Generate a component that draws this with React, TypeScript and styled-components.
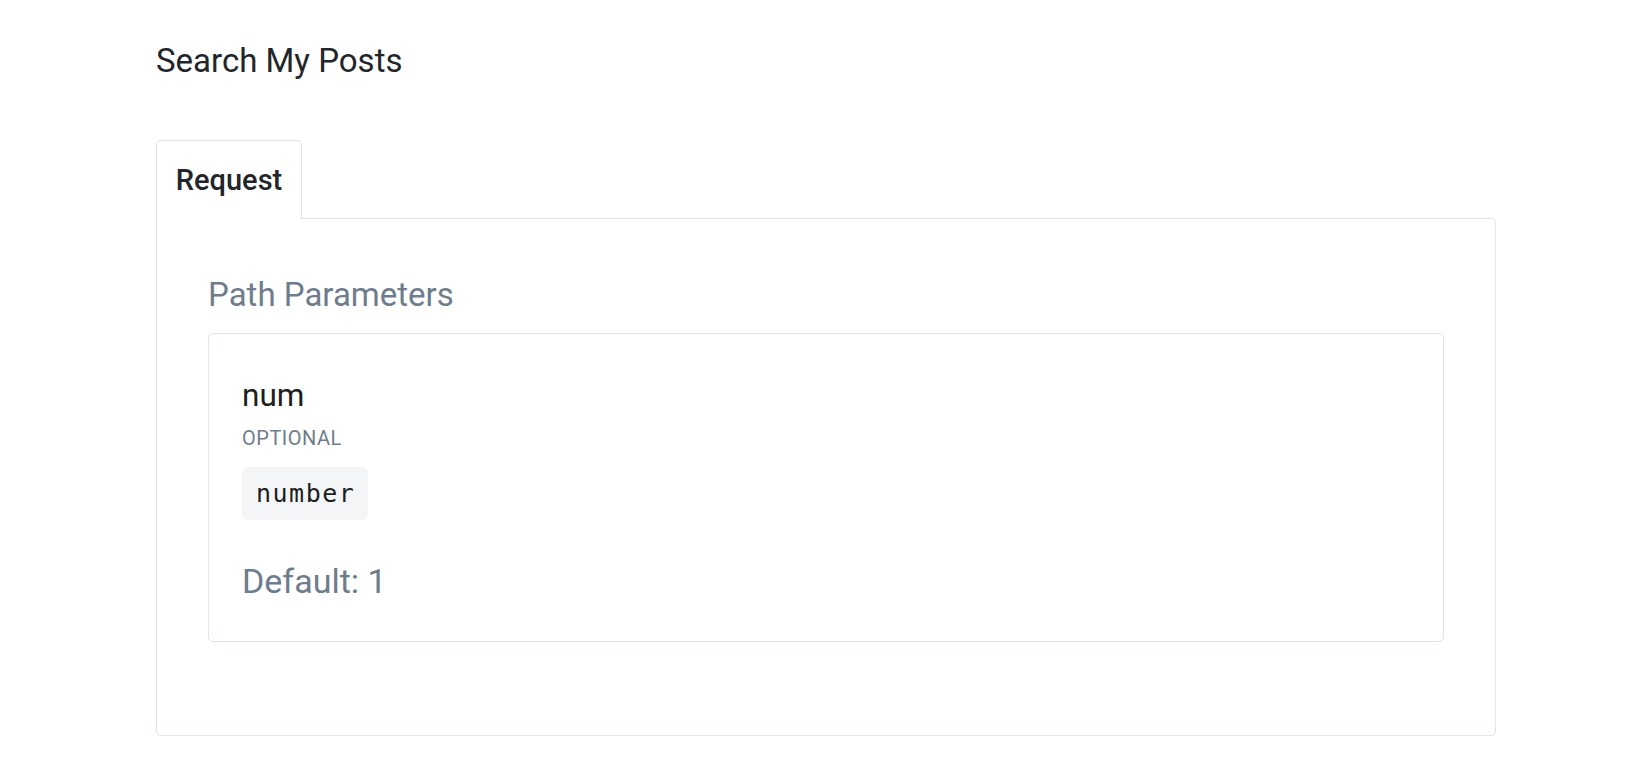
import React from "react";
import styled, { createGlobalStyle } from "styled-components";

const GlobalStyle = createGlobalStyle`
  html, body {
    margin: 0;
    padding: 0;
    background: #ffffff;
  }
  body {
    font-family: Roboto, "Liberation Sans", Arial, sans-serif;
    color: #1c1e21;
    -webkit-font-smoothing: antialiased;
  }
`;

const Page = styled.main`
  margin-left: 156px;
  width: 1340px;
  display: flex;
  flex-direction: column;
`;

const Title = styled.h1`
  margin: 41px 0 0;
  font-size: 33px;
  font-weight: 400;
  line-height: 40px;
  color: #22262b;
`;

const TabBar = styled.div`
  display: flex;
  margin-top: 59px;
`;

const Tab = styled.button<{ $active?: boolean }>`
  position: relative;
  z-index: 1;
  display: flex;
  align-items: center;
  justify-content: center;
  height: 79px;
  width: 146px;
  margin-bottom: -1px;
  padding: 0;
  border: 1px solid #dfe4ea;
  border-bottom: none;
  border-radius: 5px 5px 0 0;
  background: #ffffff;
  font-family: Roboto, "Liberation Sans", Arial, sans-serif;
  font-size: 29px;
  font-weight: 500;
  color: #22262b;
  cursor: pointer;
`;

const Panel = styled.section`
  border: 1px solid #dfe4ea;
  border-radius: 0 5px 5px 5px;
  padding: 57px 51px 93px;
  display: flex;
  flex-direction: column;
`;

const SectionHeading = styled.h3`
  margin: 0 0 19px;
  font-size: 33px;
  font-weight: 400;
  line-height: 38px;
  color: #6e7d8d;
`;

const ParamCard = styled.div`
  border: 1px solid #dfe4ea;
  border-radius: 5px;
  padding: 44px 33px 40px;
  display: flex;
  flex-direction: column;
  align-items: flex-start;
`;

const ParamName = styled.div`
  font-size: 31.5px;
  line-height: 36px;
  font-weight: 400;
  color: #1c1e21;
`;

const ParamFlag = styled.div`
  margin-top: 12px;
  font-size: 20px;
  line-height: 24px;
  letter-spacing: 0.5px;
  text-transform: uppercase;
  color: #6e7d8d;
`;

const TypeBadge = styled.code`
  margin-top: 17px;
  padding: 11px 13px 11px 14px;
  border-radius: 6px;
  background: #f4f5f7;
  font-family: "DejaVu Sans Mono", "Liberation Mono", monospace;
  font-size: 25px;
  line-height: 31px;
  letter-spacing: 1.5px;
  color: #1c1e21;
`;

const DefaultValue = styled.div`
  margin-top: 41px;
  font-size: 34px;
  line-height: 40px;
  color: #6e7d8d;
`;

export default function App() {
  return (
    <>
      <GlobalStyle />
      <Page>
        <Title>Search My Posts</Title>
        <TabBar>
          <Tab $active>Request</Tab>
        </TabBar>
        <Panel>
          <SectionHeading>Path Parameters</SectionHeading>
          <ParamCard>
            <ParamName>num</ParamName>
            <ParamFlag>optional</ParamFlag>
            <TypeBadge>number</TypeBadge>
            <DefaultValue>Default: 1</DefaultValue>
          </ParamCard>
        </Panel>
      </Page>
    </>
  );
}
